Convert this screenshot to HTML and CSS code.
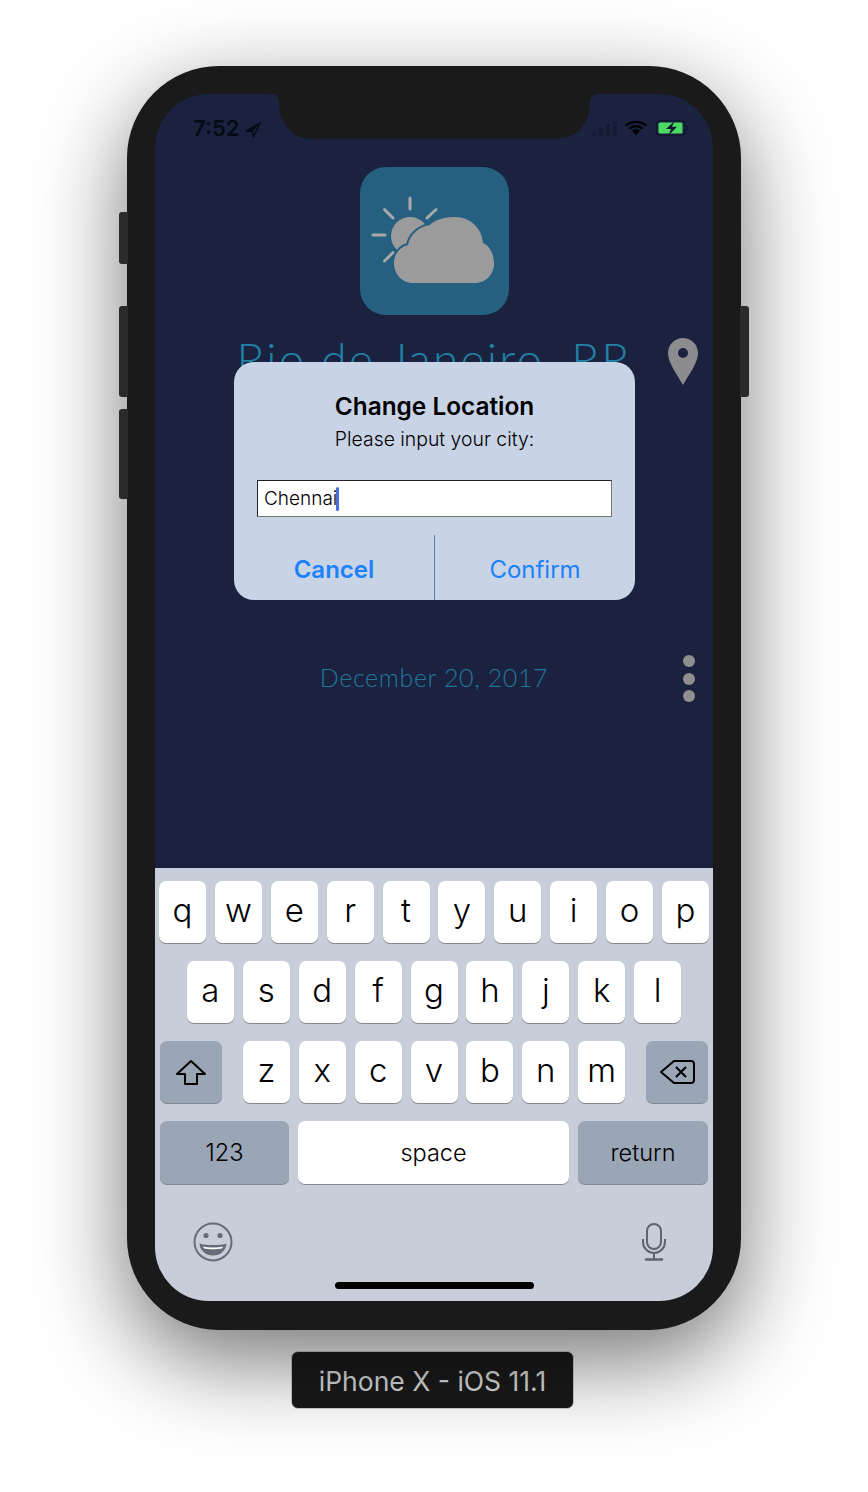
FILE: index.html
```html
<!DOCTYPE html>
<html lang="en">
<head>
    <meta charset="UTF-8">
    <meta name="viewport" content="width=device-width, initial-scale=1.0">
    <title>iPhone X - iOS 11.1</title>
    <link rel="stylesheet" href="styles.css">
</head>
<body>
    <div class="phone">
        <div class="side-btn side-mute"></div>
        <div class="side-btn side-up"></div>
        <div class="side-btn side-down"></div>
        <div class="side-btn side-power"></div>

        <div class="screen">
            <div class="app">
                <div class="status">
                    <div class="status-left">
                        <span class="time">7:52</span>
                        <svg class="loc-arrow" width="16" height="16" viewBox="0 0 16 16"><path d="M15 1 1 9 7.6 9.2 8.4 15Z" fill="none" stroke="#050a14" stroke-width="1.4" stroke-linejoin="round"/><path d="M15 1 7.6 9.2 1 9Z" fill="#050a14"/></svg>
                    </div>
                    <div class="status-right">
                        <div class="signal"><i class="b1"></i><i class="b2"></i><i class="b3"></i><i class="b4"></i></div>
                        <svg width="22" height="16" viewBox="0 0 22 16"><path d="M1 5.6C6.6.6 15.4.6 21 5.6M4.2 8.8C8 5.4 14 5.4 17.8 8.8" fill="none" stroke="#000" stroke-width="2.4"/><path d="M7 10.6C9.4 8.8 12.6 8.8 15 10.6L11 15.6Z" fill="#000"/></svg>
                        <svg width="33" height="16" viewBox="-1 0 33 16"><rect x=".7" y=".7" width="28.600" height="14.600" rx="3.400" fill="none" stroke="#12182f" stroke-width="1.4"/><rect x="2.500" y="2.500" width="24" height="11" rx="1.600" fill="#4cd964"/><rect x="30.500" y="5.500" width="1.500" height="5" rx=".7" fill="#12182f"/><path d="M18.500 1 10 9h5L12.500 15.500 21 6.800h-5Z" fill="#12182f"/></svg>
                    </div>
                </div>

                <div class="app-icon">
                    <svg width="149" height="148" viewBox="0 0 149 148">
                        <g stroke="#a8a8a8" stroke-width="3" stroke-linecap="round">
                            <path d="M50 31V42M24.500 42.500 33 51M13 68H25M24.500 94 33 85.500M67 51 76 42.500"/>
                        </g>
                        <circle cx="50" cy="69" r="19" fill="#9b9b9b"/>
                        <path class="cloud" d="M53 116C42 116 34 107 34 96 34 87 40 80 48 78 50 68 58 60 70 58 74 53 84 50 95 50 110 50 122 61 123 76 130 79 134 87 134 97 134 107 126 116 115 116Z"/>
                    </svg>
                </div>

                <div class="city-row">
                    <h1 class="city">Rio de Janeiro, RR</h1>
                    <svg class="pin" width="30" height="47" viewBox="0 0 30 47"><path fill-rule="evenodd" d="M15 0C6.700 0 0 6.700 0 15 0 25 9 36 15 47 21 36 30 25 30 15 30 6.700 23.300 0 15 0ZM15 10A5 5 0 1 1 15 20 5 5 0 1 1 15 10Z" fill="#8c8c8e"/></svg>
                </div>

                <div class="date-row">
                    <p class="date">December 20, 2017</p>
                    <div class="dots"><i></i><i></i><i></i></div>
                </div>
            </div>

            <div class="keyboard">
                <div class="kb-row">
                    <div class="key">q</div><div class="key">w</div><div class="key">e</div><div class="key">r</div><div class="key">t</div><div class="key">y</div><div class="key">u</div><div class="key">i</div><div class="key">o</div><div class="key">p</div>
                </div>
                <div class="kb-row">
                    <div class="key">a</div><div class="key">s</div><div class="key">d</div><div class="key">f</div><div class="key">g</div><div class="key">h</div><div class="key">j</div><div class="key">k</div><div class="key">l</div>
                </div>
                <div class="kb-row kb-row-mid">
                    <div class="key key-fn key-icon">
                        <svg width="32" height="27" viewBox="0 0 32 27"><path d="M16 2 2 15H10V25H22V15H30Z" fill="none" stroke="#000" stroke-width="2" stroke-linejoin="round"/></svg>
                    </div>
                    <div class="kb-letters">
                        <div class="key">z</div><div class="key">x</div><div class="key">c</div><div class="key">v</div><div class="key">b</div><div class="key">n</div><div class="key">m</div>
                    </div>
                    <div class="key key-fn key-icon">
                        <svg width="36" height="26" viewBox="0 0 36 26"><path d="M15 2H32C33.700 2 35 3.300 35 5V21C35 22.700 33.700 24 32 24H15L2 13Z" fill="none" stroke="#000" stroke-width="2" stroke-linejoin="round"/><path d="M17 8 27 18M27 8 17 18" stroke="#000" stroke-width="2"/></svg>
                    </div>
                </div>
                <div class="kb-row kb-row-last">
                    <div class="key key-fn key-word key-num">123</div>
                    <div class="key key-word key-space">space</div>
                    <div class="key key-fn key-word key-return">return</div>
                </div>
                <div class="kb-tools">
                    <svg width="40" height="40" viewBox="0 0 40 40"><circle cx="20" cy="20" r="18.500" fill="none" stroke="#666c78" stroke-width="2"/><circle cx="13" cy="13.500" r="2.600" fill="#666c78"/><circle cx="27" cy="13.500" r="2.600" fill="#666c78"/><path d="M6.500 21.500C12 23.500 28 23.500 33.500 21.500 33 29 27 33.500 20 33.500S7 29 6.500 21.500Z" fill="#666c78"/><path d="M10 24.500C15 25.800 25 25.800 30 24.500L29 26.500C24 27.500 16 27.500 11 26.500Z" fill="#fff"/></svg>
                    <svg width="24" height="38" viewBox="0 0 24 38"><rect x="5" y="1" width="14" height="25" rx="7" fill="none" stroke="#5e6470" stroke-width="2"/><path d="M1 16V19C1 25 6 30 12 30S23 25 23 19V16M12 30V36" fill="none" stroke="#5e6470" stroke-width="2"/><path d="M4 36.500H20" stroke="#5e6470" stroke-width="2.500" stroke-linecap="round"/></svg>
                </div>
                <div class="home-bar"></div>
            </div>
        </div>

        <svg class="notch" width="328" height="45" viewBox="0 0 328 45"><path d="M0 0C6 0 9 3 9 8 9 30 23 44.500 41 44.500H288C306 44.500 320 30 320 8 320 3 323 0 328 0Z" fill="#1a1a1a"/></svg>

        <div class="dialog">
            <h2 class="dialog-title">Change Location</h2>
            <p class="dialog-text">Please input your city:</p>
            <div class="dialog-input">Chennai<span class="caret"></span></div>
            <div class="dialog-actions">
                <div class="dialog-btn dialog-btn-bold">Cancel</div>
                <div class="dialog-btn">Confirm</div>
            </div>
        </div>
    </div>

    <div class="device-label">iPhone X - iOS 11.1</div>
</body>
</html>
```

FILE: styles.css
```css
* {
    box-sizing: border-box;
}
html, body {
    margin: 0;
    height: 1492px;
    overflow: hidden;
}
body {
    background-color: #fff;
    font-family: Inter, "Liberation Sans", sans-serif;
}

/* device */
.phone {
    position: relative;
    width: 614px;
    height: 1264px;
    margin: 66px auto 0;
    padding: 28px;
    background-color: #1a1a1a;
    border-radius: 92px;
    box-shadow: 0 30px 90px rgba(0, 0, 0, 0.55);
}
.side-btn {
    position: absolute;
    width: 9px;
    background-color: #2a2a2a;
    border-radius: 3px 0 0 3px;
    left: -8px;
}
.side-mute { top: 146px; height: 52px; }
.side-up { top: 240px; height: 91px; }
.side-down { top: 343px; height: 90px; }
.side-power {
    left: auto;
    right: -8px;
    top: 240px;
    height: 91px;
    border-radius: 0 3px 3px 0;
}
.screen {
    display: flex;
    flex-direction: column;
    height: 1207px;
    border-radius: 54px;
    overflow: hidden;
    background-color: #1a2240;
}
.notch {
    position: absolute;
    left: 143px;
    top: 28px;
}

/* status bar */
.status {
    display: flex;
    justify-content: space-between;
    height: 73px;
    padding: 26px 25px 0 38px;
}
.status-left, .status-right {
    display: flex;
    align-items: flex-start;
}
.status-left {
    gap: 5px;
}
.status-right {
    gap: 8px;
}
.time {
    margin-top: -1px;
    font-size: 22px;
    font-weight: 600;
    line-height: 18px;
    color: #050a14;
}
.loc-arrow {
    margin-top: 2px;
}
.signal {
    display: flex;
    align-items: flex-end;
    gap: 3px;
    height: 16px;
}
.signal i {
    width: 4px;
    background-color: #141a33;
}
.signal .b1 { height: 4px; }
.signal .b2 { height: 8px; }
.signal .b3 { height: 12px; }
.signal .b4 { height: 15px; }

/* app behind the alert */
.app {
    flex: 1;
}
.app-icon {
    width: 149px;
    height: 148px;
    margin: 0 auto;
    background-color: #266080;
    border-radius: 26px;
}
.cloud {
    fill: #9b9b9b;
    stroke: #266080;
    stroke-width: 4;
    paint-order: stroke;
}
.city-row {
    position: relative;
    display: flex;
    justify-content: center;
    height: 50px;
    margin-top: 15px;
}
.city {
    margin: 0;
    font-family: Lato, sans-serif;
    font-size: 46px;
    font-weight: 300;
    line-height: 57px;
    letter-spacing: 2.200px;
    white-space: nowrap;
    color: #2182a6;
}
.pin {
    position: absolute;
    right: 15px;
    top: 8px;
}
.date-row {
    position: relative;
    display: flex;
    justify-content: center;
    align-items: center;
    height: 46px;
    margin-top: 274px;
}
.date {
    margin: 0;
    font-family: Lato, sans-serif;
    font-size: 25px;
    font-weight: 300;
    letter-spacing: 0.620px;
    color: #22789b;
}
.dots {
    position: absolute;
    right: 18px;
    top: 1px;
    display: flex;
    flex-direction: column;
    gap: 5.500px;
}
.dots i {
    width: 12px;
    height: 12px;
    background-color: #8f8f8f;
    border-radius: 50%;
}

/* keyboard */
.keyboard {
    height: 433px;
    padding-top: 13px;
    background-color: #c7cdd9;
}
.kb-row, .kb-letters {
    display: flex;
    justify-content: center;
    gap: 8.900px;
}
.kb-row {
    height: 62px;
    margin-bottom: 18px;
}
.kb-row-mid {
    justify-content: space-between;
    padding: 0 5px;
}
.kb-row-last {
    height: 63px;
    margin-bottom: 0;
    padding: 0 5px;
}
.key {
    display: flex;
    align-items: center;
    justify-content: center;
    width: 47px;
    height: 62px;
    padding-bottom: 5px;
    background-color: #fff;
    border-radius: 7px;
    box-shadow: 0 1px 0 #858890;
    font-size: 33px;
    font-weight: 300;
    color: #000;
}
.key-fn {
    background-color: #9aa5b6;
}
.key-icon {
    width: 62px;
    padding-bottom: 0;
}
.key-word {
    height: 63px;
    padding-bottom: 0;
    font-size: 23.500px;
    font-weight: 300;
}
.key-num {
    width: 129px;
}
.key-return {
    width: 130px;
}
.key-space {
    flex: 1;
}
.kb-tools {
    display: flex;
    justify-content: space-between;
    align-items: center;
    height: 40px;
    margin-top: 38px;
    padding: 0 47px 0 38px;
}
.home-bar {
    width: 199px;
    height: 7px;
    margin: 20px auto 0;
    background-color: #000;
    border-radius: 4px;
}

/* alert */
.dialog {
    position: absolute;
    left: 107px;
    top: 296px;
    width: 401px;
    height: 238px;
    padding-top: 29px;
    background-color: #c9d3e6;
    border-radius: 20px;
    text-align: center;
}
.dialog-title {
    margin: 0;
    font-size: 24.400px;
    font-weight: 600;
    line-height: 30px;
    color: #000;
}
.dialog-text {
    margin: 6px 0 0;
    font-size: 19.400px;
    font-weight: 300;
    line-height: 24px;
    color: #000;
}
.dialog-input {
    display: flex;
    align-items: center;
    height: 37px;
    margin: 29px 23px 0;
    padding-left: 6px;
    background-color: #fff;
    border: 1px solid;
    border-color: #222 #767676 #767676 #222;
    font-size: 19px;
    font-weight: 300;
    text-align: left;
    color: #000;
}
.caret {
    width: 3px;
    height: 24px;
    margin-left: -1px;
    background-color: #4a6ee0;
    border-radius: 2px;
}
.dialog-actions {
    display: flex;
    height: 65px;
    margin-top: 18px;
}
.dialog-btn {
    display: flex;
    flex: 1;
    align-items: center;
    justify-content: center;
    padding-top: 3px;
    font-size: 24px;
    color: #1a82fb;
}
.dialog-btn-bold {
    font-weight: 600;
    border-right: 1px solid #5f7ab8;
}

/* caption */
.device-label {
    width: 283px;
    height: 58px;
    margin: 21px 0 0 291px;
    background-color: #1a1a1a;
    border: 1px solid #d0d0d0;
    border-radius: 7px;
    font-size: 26.500px;
    line-height: 58px;
    text-align: center;
    color: #dedede;
}
```
